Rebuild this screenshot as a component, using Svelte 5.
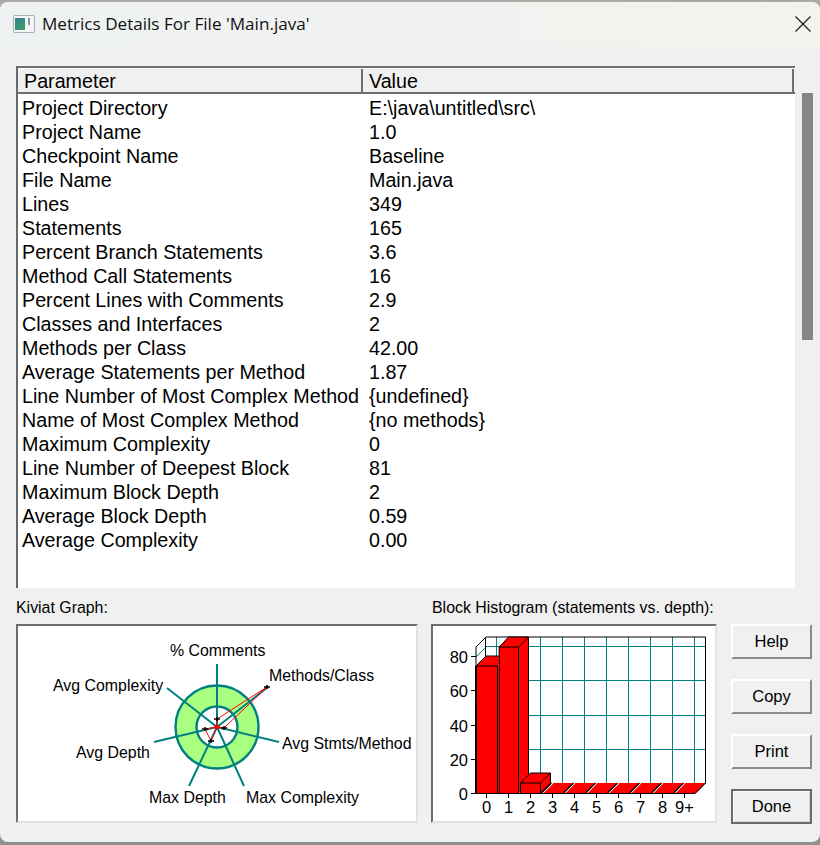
<script>
  const rows = [
    ['Project Directory', 'E:\\java\\untitled\\src\\'],
    ['Project Name', '1.0'],
    ['Checkpoint Name', 'Baseline'],
    ['File Name', 'Main.java'],
    ['Lines', '349'],
    ['Statements', '165'],
    ['Percent Branch Statements', '3.6'],
    ['Method Call Statements', '16'],
    ['Percent Lines with Comments', '2.9'],
    ['Classes and Interfaces', '2'],
    ['Methods per Class', '42.00'],
    ['Average Statements per Method', '1.87'],
    ['Line Number of Most Complex Method', '{undefined}'],
    ['Name of Most Complex Method', '{no methods}'],
    ['Maximum Complexity', '0'],
    ['Line Number of Deepest Block', '81'],
    ['Maximum Block Depth', '2'],
    ['Average Block Depth', '0.59'],
    ['Average Complexity', '0.00']
  ];
  const spokes = [[199,38],[250,61],[261,116],[226,160],[171,160],[136,116],[149,62]];
  const kLabels = [
    ['% Comments', 152, 30],
    ['Methods/Class', 251, 55],
    ['Avg Stmts/Method', 264, 123],
    ['Max Complexity', 228, 177],
    ['Max Depth', 131, 177],
    ['Avg Depth', 58, 132],
    ['Avg Complexity', 35, 65]
  ];
  const markers = [[199,93],[249,61],[206,102],[193,115],[187,103]];
  const vGrid = [63.5,85.5,107.5,129.5,151.5,173.5,195.5,217.5,239.5,261.5];
  const hGrid = [20.5,54.5,89.5,123.5];
  const yLabels = [['80',30.5],['60',64.5],['40',99.5],['20',133.5],['0',167.5]];
  const xLabels = ['0','1','2','3','4','5','6','7','8','9+'];
  const slashes = [108.5,130.5,152.5,174.5,196.5,218.5,240.5];
  const buttons = ['Help','Copy','Print','Done'];
</script>

<div class="window">
  <header class="titlebar">
    <svg class="appicon" width="22" height="18" viewBox="0 0 22 18">
      <defs>
        <linearGradient id="ic" x1="0" y1="0" x2="0.6" y2="1">
          <stop offset="0" stop-color="#2f7f96"/>
          <stop offset="1" stop-color="#3f9c66"/>
        </linearGradient>
      </defs>
      <rect x="0.5" y="0.5" width="21" height="17" rx="1.5" fill="#f4f5f6" stroke="#a9aeb4"/>
      <rect x="2" y="3" width="10" height="12" fill="url(#ic)"/>
      <rect x="15" y="3" width="2" height="7" fill="#7f9a9b"/>
    </svg>
    <span class="title">Metrics Details For File 'Main.java'</span>
    <svg class="close" width="16" height="16" viewBox="0 0 16 16">
      <path d="M0.5 0.5 L15.5 15.5 M15.5 0.5 L0.5 15.5" stroke="#1a1a1a" stroke-width="1.2" fill="none"/>
    </svg>
  </header>

  <main class="body">
    <section class="table">
      <div class="list">
        <div class="head">
          <div class="hcell first">Parameter</div>
          <div class="hcell second">Value</div>
        </div>
        <div class="rows">
          {#each rows as r}
            <div class="row"><span class="param">{r[0]}</span><span>{r[1]}</span></div>
          {/each}
        </div>
      </div>
      <div class="scroll"><div class="thumb"></div></div>
    </section>

    <section class="bottom">
      <div class="group kiviat">
        <div class="label">Kiviat Graph:</div>
        <div class="panel">
          <svg width="398" height="195" viewBox="0 0 398 195">
            <circle cx="199" cy="101" r="31.5" fill="none" stroke="#a8ff80" stroke-width="21"/>
            <circle cx="199" cy="101" r="41.5" fill="none" stroke="#008080" stroke-width="2.4"/>
            <circle cx="199" cy="101" r="20.5" fill="none" stroke="#008080" stroke-width="2.4"/>
            {#each spokes as s}
              <line x1="199" y1="101" x2={s[0]} y2={s[1]} stroke="#008080" stroke-width="2"/>
            {/each}
            <polygon points="199,93 249,61 206,102 199,101 193,115 187,103 199,101" fill="none" stroke="#ff0000" stroke-width="1"/>
            <circle cx="199" cy="101" r="2.5" fill="#ff0000"/>
            {#each markers as m}
              <path d="M{m[0]-3} {m[1]}h6M{m[0]} {m[1]-2}v4" stroke="#000" stroke-width="1.5"/>
            {/each}
            {#each kLabels as l}
              <text x={l[1]} y={l[2]} class="ctext">{l[0]}</text>
            {/each}
          </svg>
        </div>
      </div>

      <div class="group histo">
        <div class="label">Block Histogram (statements vs. depth):</div>
        <div class="panel">
          <svg width="282" height="195" viewBox="0 0 282 195">
            {#each vGrid as x}
              <line x1={x} y1="11" x2={x} y2="157" stroke="#008080" stroke-width="1"/>
            {/each}
            {#each hGrid as y}
              <line x1="53" y1={y} x2="273" y2={y} stroke="#008080" stroke-width="1"/>
            {/each}
            <path d="M43 31 L53 21" stroke="#008080" fill="none"/>
            <path d="M43 21 L53 11 H272.5 V157 L262.5 167 M43 21 V40 M52.5 11 V31" stroke="#000" fill="none"/>

            <path d="M98 167 L108 157 H272.5 L262.5 167Z" fill="#ff0000"/>
            {#each slashes as x}
              <path d="M{x + 1.2} 167 l10 -10" stroke="#fff" stroke-width="1.3"/>
              <path d="M{x} 167 l10 -10" stroke="#000" stroke-width="1.2"/>
            {/each}
            <path d="M272.5 157 L262.5 167" fill="none" stroke="#000"/>

            <!-- bar 0 -->
            <path d="M43 40 L53 30 H74 V167 H43Z" fill="#ff0000"/>
            <path d="M43 40 L53 30 H74 M43 40 H64.5 V167" fill="none" stroke="#000"/>
            <!-- bar 1 -->
            <path d="M65.5 21 L75.5 11 H95.5 V157 L86 167 H65.5Z" fill="#ff0000"/>
            <path d="M66.5 167 V21 H85.5 V167 M66.5 21 L75.5 11 H95.5 V157 M85.5 21 L95.5 11" fill="none" stroke="#000"/>
            <!-- bar 2 -->
            <path d="M87.5 157 L97.5 147 H117.5 V157 L107.5 167 H87.5Z" fill="#ff0000"/>
            <path d="M87.5 167 V157 H107.5 V167 M87.5 157 L97.5 147 H117.5 V157 L107.5 167 M107.5 157 L117.5 147" fill="none" stroke="#000"/>

            <path d="M43 167.5 H262.5" fill="none" stroke="#000" stroke-width="1"/>
            <path d="M43 40 V168" stroke="#000" stroke-width="2"/>
            {#each yLabels as l}
              <path d="M38 {l[1]} H43" stroke="#000"/>
              <text x="35" y={l[1] + 6} text-anchor="end" class="ctext axis">{l[0]}</text>
            {/each}
            {#each xLabels as l, i}
              <path d="M{53.5 + i * 22} 167 v5" stroke="#000"/>
              <text x={53.5 + i * 22} y="187" text-anchor="middle" class="ctext axis">{l}</text>
            {/each}
          </svg>
        </div>
      </div>

      <div class="buttons">
        {#each buttons as b}
          <button class:def={b === 'Done'}>{b}</button>
        {/each}
      </div>
    </section>
  </main>
</div>

<style>
  :global(body) {
    margin: 0;
    background: linear-gradient(#aaa9a5, #8f8f8f);
    min-height: 845px;
  }
  .window {
    position: relative;
    top: 2px;
    width: 820px;
    height: 840px;
    background: #f0f0f0;
    border-radius: 8px;
    overflow: hidden;
    display: flex;
    flex-direction: column;
    font-family: "Liberation Sans", Arial, sans-serif;
    color: #000;
  }
  .titlebar {
    height: 45px;
    flex: none;
    display: flex;
    align-items: center;
    padding: 0 9px 2px 13px;
    box-sizing: border-box;
    background: linear-gradient(90deg, #eef2f2, #f3f3ee);
  }
  .appicon {
    margin-right: 7px;
  }
  .title {
    font-family: "Open Sans", "Noto Sans", sans-serif;
    font-size: 17.1px;
    flex: 1;
    color: #111;
  }
  .body {
    flex: 1;
    display: flex;
    flex-direction: column;
    padding: 19px 0 0 16px;
  }
  .table {
    display: flex;
    height: 522px;
  }
  .list {
    width: 779px;
    background: #fff;
    border-left: 2px solid #696969;
    border-top: 2px solid #6e6e6e;
    box-sizing: border-box;
    display: flex;
    flex-direction: column;
  }
  .head {
    display: flex;
    height: 26px;
    flex: none;
    background: #f0f0f0;
    font-size: 19.7px;
    box-sizing: border-box;
    border-bottom: 2px solid #6e6e6e;
    border-top: 1px solid #fff;
  }
  .hcell {
    box-sizing: border-box;
    padding-left: 6px;
    line-height: 24px;
    border-right: 2px solid #6e6e6e;
  }
  .first { width: 345px; }
  .second { width: 431px; }
  .rows {
    padding-top: 2px;
    font-size: 19.7px;
  }
  .row {
    display: flex;
    height: 24px;
    line-height: 24px;
    padding-left: 4px;
  }
  .param {
    width: 347px;
    flex: none;
    white-space: nowrap;
  }
  .scroll {
    flex: 1;
    padding: 27px 0 0 7px;
  }
  .thumb {
    width: 11px;
    height: 247px;
    background: #868686;
  }
  .bottom {
    display: flex;
    padding-top: 10px;
  }
  .group {
    display: flex;
    flex-direction: column;
  }
  .kiviat {
    width: 402px;
    margin-right: 13px;
  }
  .histo {
    width: 286px;
    margin-right: 14px;
  }
  .label {
    font-size: 15.9px;
    height: 19px;
    line-height: 20px;
    margin-bottom: 7px;
    white-space: nowrap;
  }
  .histo .label {
    padding-left: 1px;
  }
  .panel {
    height: 199px;
    box-sizing: border-box;
    background: #fff;
    border: 2px solid #e2e2e2;
    border-top-color: #6e6e6e;
    border-left-color: #6e6e6e;
  }
  .panel svg {
    display: block;
  }
  .ctext {
    font-family: "Liberation Sans", Arial, sans-serif;
    font-size: 15.9px;
    fill: #000;
  }
  .axis {
    font-size: 16.5px;
  }
  .buttons {
    width: 81px;
    padding-top: 26px;
    display: flex;
    flex-direction: column;
    gap: 20px;
  }
  button {
    width: 81px;
    height: 35px;
    padding: 0;
    background: #f0f0f0;
    font-family: "Liberation Sans", Arial, sans-serif;
    font-size: 16.5px;
    color: #000;
    border: 2px solid;
    border-color: #fff #8a8a8a #8a8a8a #fff;
    box-sizing: border-box;
  }
  button.def {
    border: 2px solid #6a6a6a;
    box-shadow: inset 1px 1px 0 #fff, inset -1px -1px 0 #d8d8d8;
  }
</style>
